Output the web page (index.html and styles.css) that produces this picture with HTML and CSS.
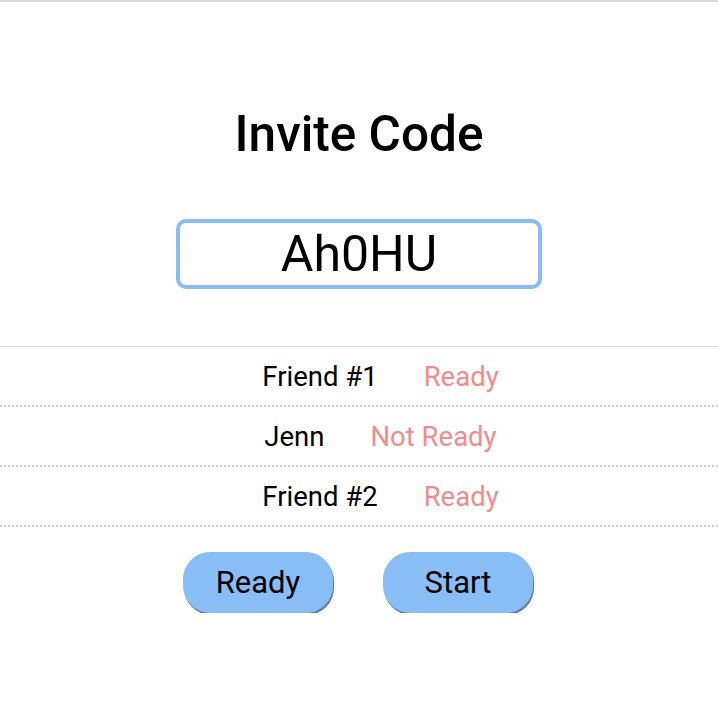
FILE: index.html
```html
<!DOCTYPE html>
<html>
<head>
<meta charset="utf-8">
<link rel="stylesheet" href="styles.css">
</head>
<body>
<div class="page">
  <h1 class="title">Invite Code</h1>
  <div class="code-wrap"><div class="code">Ah0HU</div></div>
  <div class="players">
    <div class="row"><span class="name">Friend #1</span><span class="status">Ready</span></div>
    <div class="row"><span class="name">Jenn</span><span class="status">Not Ready</span></div>
    <div class="row"><span class="name">Friend #2</span><span class="status">Ready</span></div>
  </div>
  <div class="actions">
    <button class="btn">Ready</button>
    <button class="btn">Start</button>
  </div>
</div>
</body>
</html>
```
FILE: styles.css
```css
html, body {
  margin: 0;
  padding: 0;
  background: #fff;
}
body {
  font-family: Roboto, "Liberation Sans", sans-serif;
  color: #000;
}
.page {
  border-top: 2px solid #d9d9d9;
  display: flex;
  flex-direction: column;
  align-items: stretch;
}
.title {
  margin: 102px 0 0 0;
  font-size: 49.5px;
  font-weight: 500;
  line-height: 60px;
  text-align: center;
}
.code-wrap {
  display: flex;
  justify-content: center;
  margin-top: 55px;
}
.code {
  width: 358px;
  height: 62px;
  border: 4px solid #89bdf5;
  border-radius: 10px;
  font-size: 50px;
  line-height: 62px;
  text-align: center;
}
.players {
  margin-top: 57px;
  border-top: 1px solid #dcdcdc;
}
.row {
  height: 58px;
  border-bottom: 2px dotted #cfcfcf;
  display: flex;
  justify-content: center;
  align-items: center;
  gap: 46px;
  padding-left: 43px;
  font-size: 27.5px;
}
.status {
  color: #f28b8b;
}
.actions {
  display: flex;
  justify-content: center;
  gap: 50px;
  margin-top: 25px;
  padding-right: 2px;
}
.btn {
  width: 150px;
  height: 61px;
  border: none;
  border-radius: 27px;
  background: #89bdf5;
  box-shadow: 1px 2px 0 #5b7cab;
  font-family: Roboto, "Liberation Sans", sans-serif;
  font-size: 31px;
  color: #000;
  padding: 0;
}
```
